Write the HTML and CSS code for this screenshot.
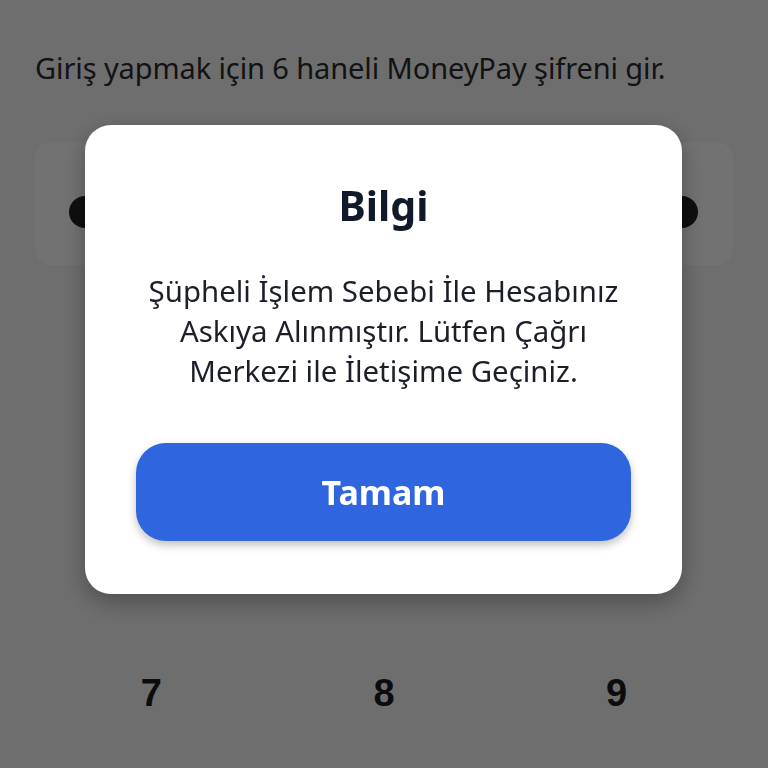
FILE: index.html
```html
<!doctype html>
<html lang="tr">

<head>
  <meta charset="UTF-8" />
  <meta name="viewport" content="width=device-width, initial-scale=1.0" />
  <title>MoneyPay Giriş</title>
  <link rel="stylesheet" href="styles.css">
</head>

<body>
  <div class="screen">
    <p class="intro">Giriş yapmak için 6 haneli MoneyPay şifreni gir.</p>

    <div class="pin-box">
      <span class="pin-dot"></span>
      <span class="pin-dot"></span>
      <span class="pin-dot"></span>
      <span class="pin-dot"></span>
      <span class="pin-dot"></span>
      <span class="pin-dot"></span>
    </div>

    <!-- Only the last visible keypad row, the rest sits behind the dialog -->
    <div class="keypad">
      <button class="key">7</button>
      <button class="key">8</button>
      <button class="key">9</button>
    </div>
  </div>

  <!-- Info dialog over the dimmed screen -->
  <div class="overlay">
    <div class="dialog">
      <h1 class="dialog-title">Bilgi</h1>
      <p class="dialog-text">
        Şüpheli İşlem Sebebi İle Hesabınız<br />
        Askıya Alınmıştır. Lütfen Çağrı<br />
        Merkezi ile İletişime Geçiniz.
      </p>
      <button class="dialog-button">Tamam</button>
    </div>
  </div>
</body>

</html>
```

FILE: styles.css
```css
body {
  margin: 0;
  font-family: "Noto Sans", "Open Sans", sans-serif;
  background-color: #f3f3f5;
  color: #2c2c30;
  height: 768px;
  overflow: hidden;
}

.screen {
  padding: 32px 35px 0;
}

.intro {
  margin: 0;
  font-size: 29px;
  line-height: 72px;
  letter-spacing: -0.1px;
}

.pin-box {
  margin-top: 38px;
  height: 123px;
  box-sizing: border-box;
  border-radius: 16px;
  background-color: #fdfdfd;
  display: flex;
  align-items: flex-start;
  justify-content: space-between;
  padding: 54px 35px 0 34px;
}

.pin-dot {
  width: 32px;
  height: 32px;
  border-radius: 50%;
  background-color: #222226;
}

.keypad {
  display: grid;
  grid-template-columns: repeat(3, 1fr);
  grid-auto-rows: 120px;
  margin-top: 368px;
}

.key {
  border: none;
  background: none;
  font-family: "Liberation Sans", Arial, sans-serif;
  font-weight: bold;
  font-size: 38px;
  color: #1c1c22;
}

.overlay {
  position: fixed;
  inset: 0;
  background-color: rgba(0, 0, 0, 0.55);
  display: flex;
  justify-content: center;
  align-items: flex-start;
  padding-top: 125px;
}

.dialog {
  width: 597px;
  box-sizing: border-box;
  margin-left: -1px;
  padding: 52px 51px 53px;
  background-color: #fff;
  border-radius: 26px;
  box-shadow: 0 8px 24px rgba(0, 0, 0, 0.3);
  text-align: center;
}

.dialog-title {
  margin: 0;
  font-size: 41px;
  line-height: 56px;
  font-weight: bold;
  color: #111a2a;
}

.dialog-text {
  margin: 38px 0 0;
  font-size: 29.4px;
  line-height: 40px;
  color: #1c1f2a;
}

.dialog-button {
  display: block;
  width: 100%;
  height: 98px;
  margin-top: 52px;
  border: none;
  border-radius: 30px;
  background-color: #2f66e0;
  box-shadow: 0 4px 8px rgba(0, 0, 0, 0.25);
  color: #fff;
  font-family: "Noto Sans", "Open Sans", sans-serif;
  font-size: 34px;
  font-weight: bold;
}
```
